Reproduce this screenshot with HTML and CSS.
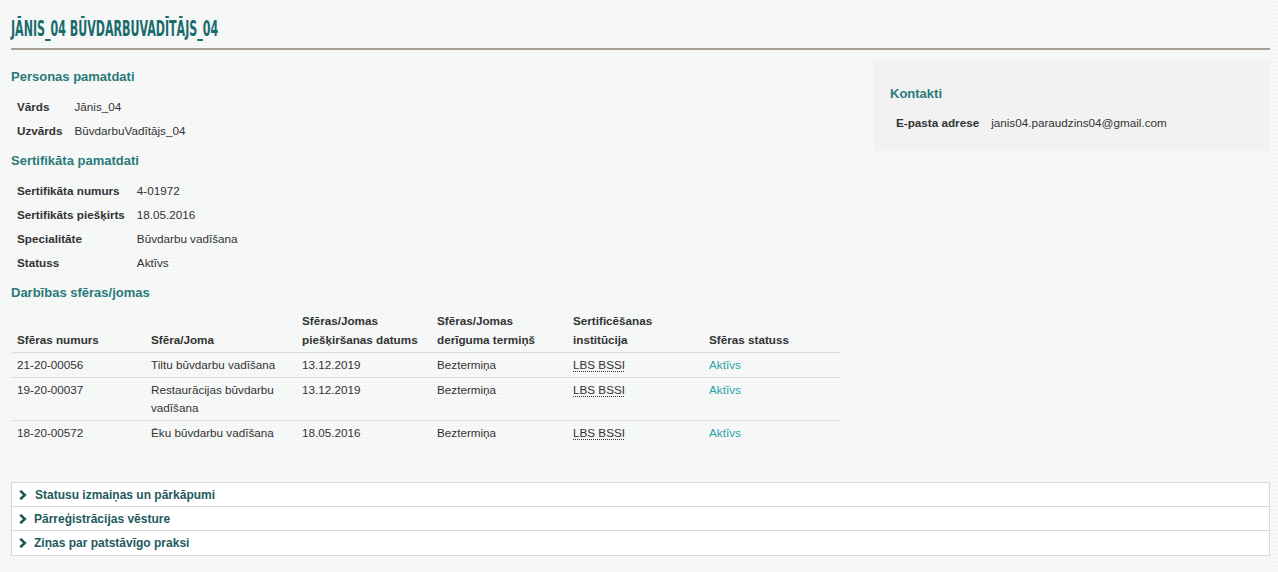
FILE: index.html
```html
<!DOCTYPE html>
<html lang="lv">
<head>
<meta charset="utf-8">
<title>Jānis_04 BūvdarbuVadītājs_04</title>
<link rel="stylesheet" href="styles.css">
</head>
<body>
<div class="page">
  <div class="title-bar">
    <h1 class="page-title">Jānis_04 BūvdarbuVadītājs_04</h1>
  </div>
  <div class="main">
    <div class="left-col">
      <h2 class="section-title first">Personas pamatdati</h2>
      <table class="info">
        <tr><th>Vārds</th><td>Jānis_04</td></tr>
        <tr><th>Uzvārds</th><td>BūvdarbuVadītājs_04</td></tr>
      </table>
      <h2 class="section-title">Sertifikāta pamatdati</h2>
      <table class="info">
        <tr><th>Sertifikāta numurs</th><td>4-01972</td></tr>
        <tr><th>Sertifikāts piešķirts</th><td>18.05.2016</td></tr>
        <tr><th>Specialitāte</th><td>Būvdarbu vadīšana</td></tr>
        <tr><th>Statuss</th><td>Aktīvs</td></tr>
      </table>
      <h2 class="section-title">Darbības sfēras/jomas</h2>
      <table class="spheres">
        <colgroup>
          <col class="c1"><col class="c2"><col class="c3"><col class="c4"><col class="c5"><col class="c6">
        </colgroup>
        <thead>
          <tr>
            <th>Sfēras numurs</th>
            <th>Sfēra/Joma</th>
            <th>Sfēras/Jomas piešķiršanas datums</th>
            <th>Sfēras/Jomas derīguma termiņš</th>
            <th>Sertificēšanas institūcija</th>
            <th>Sfēras statuss</th>
          </tr>
        </thead>
        <tbody>
          <tr>
            <td>21-20-00056</td>
            <td>Tiltu būvdarbu vadīšana</td>
            <td>13.12.2019</td>
            <td>Beztermiņa</td>
            <td><abbr class="inst">LBS BSSI</abbr></td>
            <td><a class="status" href="#">Aktīvs</a></td>
          </tr>
          <tr>
            <td>19-20-00037</td>
            <td>Restaurācijas būvdarbu vadīšana</td>
            <td>13.12.2019</td>
            <td>Beztermiņa</td>
            <td><abbr class="inst">LBS BSSI</abbr></td>
            <td><a class="status" href="#">Aktīvs</a></td>
          </tr>
          <tr>
            <td>18-20-00572</td>
            <td>Ēku būvdarbu vadīšana</td>
            <td>18.05.2016</td>
            <td>Beztermiņa</td>
            <td><abbr class="inst">LBS BSSI</abbr></td>
            <td><a class="status" href="#">Aktīvs</a></td>
          </tr>
        </tbody>
      </table>
    </div>
    <aside class="contacts">
      <h2 class="section-title">Kontakti</h2>
      <table class="info">
        <tr><th>E-pasta adrese</th><td>janis04.paraudzins04@gmail.com</td></tr>
      </table>
    </aside>
  </div>
  <div class="accordion">
    <div class="acc-item">
      <svg class="chev" width="8" height="10" viewBox="0 0 8 10"><path d="M1.3 0.8 L5.8 5 L1.3 9.2" fill="none" stroke="currentColor" stroke-width="2.6"/></svg>
      <span class="acc-label first-label">Statusu izmaiņas un pārkāpumi</span>
    </div>
    <div class="acc-item">
      <svg class="chev" width="8" height="10" viewBox="0 0 8 10"><path d="M1.3 0.8 L5.8 5 L1.3 9.2" fill="none" stroke="currentColor" stroke-width="2.6"/></svg>
      <span class="acc-label">Pārreģistrācijas vēsture</span>
    </div>
    <div class="acc-item last">
      <svg class="chev" width="8" height="10" viewBox="0 0 8 10"><path d="M1.3 0.8 L5.8 5 L1.3 9.2" fill="none" stroke="currentColor" stroke-width="2.6"/></svg>
      <span class="acc-label">Ziņas par patstāvīgo praksi</span>
    </div>
  </div>
</div>
</body>
</html>
```
FILE: styles.css
```css
html, body {
  margin: 0;
  padding: 0;
}
body {
  background-color: #f7f8f8;
  background-image: radial-gradient(rgba(0,0,0,0.018) 1px, transparent 1px);
  background-size: 4px 4px;
  font-family: "Liberation Sans", Arial, sans-serif;
  font-size: 11.7px;
  color: #333;
}
.page {
  padding: 0 8px 0 11px;
}
.title-bar {
  padding: 18px 0 8px 0;
  border-bottom: 2px solid #a59f95;
}
.page-title {
  display: inline-block;
  margin: 0;
  font-family: "DejaVu Sans Condensed", "Liberation Sans", sans-serif;
  font-stretch: condensed;
  font-weight: bold;
  font-size: 20.5px;
  line-height: 22px;
  text-transform: uppercase;
  color: #1a6b6d;
  white-space: nowrap;
  transform: scaleX(0.6);
  transform-origin: 0 50%;
}
.main {
  display: flex;
  align-items: flex-start;
}
.left-col {
  width: 829px;
  flex: none;
}
.section-title {
  margin: 9px 0 9px 0;
  font-size: 13px;
  line-height: 18px;
  font-weight: bold;
  color: #2a7a7a;
}
.section-title.first {
  margin-top: 18px;
}
table {
  border-collapse: collapse;
  border-spacing: 0;
}
.info th, .info td {
  padding: 0 6px;
  height: 24px;
  line-height: 18px;
  text-align: left;
  vertical-align: middle;
  white-space: nowrap;
}
.info th {
  font-weight: bold;
  color: #333;
}
.info td {
  font-weight: normal;
}
.spheres {
  width: 829px;
  table-layout: fixed;
  margin-top: 6px;
}
.spheres .c1 { width: 134px; }
.spheres .c2 { width: 151px; }
.spheres .c3 { width: 135px; }
.spheres .c4 { width: 136px; }
.spheres .c5 { width: 136px; }
.spheres .c6 { width: 137px; }
.spheres th {
  text-align: left;
  vertical-align: bottom;
  font-weight: bold;
  line-height: 19px;
  padding: 0 6px 3px 6px;
  border-bottom: 1px solid #ddd;
}
.spheres td {
  vertical-align: top;
  line-height: 18px;
  padding: 3px 6px 3px 6px;
  border-top: 1px solid #ddd;
}
.spheres tbody tr:first-child td {
  border-top: none;
}
.inst {
  text-decoration: underline dotted;
  text-decoration-thickness: 1px;
  text-underline-offset: 2px;
  cursor: help;
}
.status {
  color: #2aa5a8;
  text-decoration: none;
}
.contacts {
  margin-left: 33px;
  margin-top: 10px;
  flex: 1;
  background: #f2f2f2;
  padding: 25px 17px 16px 17px;
}
.contacts .section-title {
  margin: 0 0 8px 0;
}
.accordion {
  margin-top: 37px;
  background: #fff;
  border: 1px solid #d9d9d9;
}
.acc-item {
  display: flex;
  align-items: center;
  height: 23px;
  padding-left: 7px;
  border-top: 1px solid #d9d9d9;
  color: #1e5a5c;
}
.acc-item:first-child {
  border-top: none;
}
.acc-item.last {
  height: 24px;
}
.chev {
  flex: none;
  color: #1e5a5c;
}
.acc-label {
  margin-left: 7px;
  font-weight: bold;
  font-size: 12px;
  line-height: 18px;
}
.acc-label.first-label {
  margin-left: 8px;
}
```
